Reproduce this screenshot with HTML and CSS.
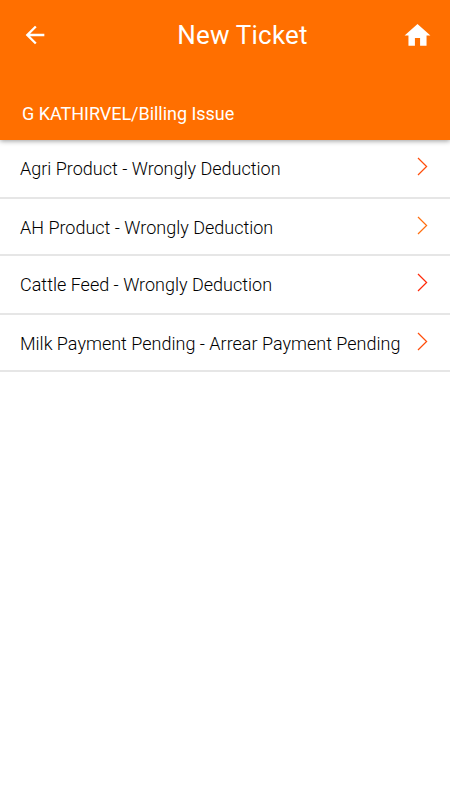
FILE: index.html
```html
<!DOCTYPE html>
<html lang="en">
<head>
<meta charset="utf-8">
<title>New Ticket</title>
<link rel="stylesheet" href="styles.css">
</head>
<body>
<header class="header">
  <div class="bar">
    <svg class="back" viewBox="0 0 24 24"><path d="M20 11H7.83l5.59-5.59L12 4l-8 8 8 8 1.41-1.41L7.83 13H20v-2z"/></svg>
    <h1 class="title">New Ticket</h1>
    <svg class="home" viewBox="0 0 24 24"><path d="M10 20v-6h4v6h5v-8h3L12 3 2 12h3v8z"/></svg>
  </div>
  <p class="path">G KATHIRVEL/Billing Issue</p>
</header>
<ul class="list">
  <li class="row tall"><span class="label">Agri Product - Wrongly Deduction</span><svg class="chevron" viewBox="0 0 11 19"><path d="M1 1 9.6 9.5 1 18"/></svg></li>
  <li class="row"><span class="label">AH Product - Wrongly Deduction</span><svg class="chevron amber" viewBox="0 0 11 19"><path d="M1 1 9.6 9.5 1 18"/></svg></li>
  <li class="row tall"><span class="label">Cattle Feed - Wrongly Deduction</span><svg class="chevron red" viewBox="0 0 11 19"><path d="M1 1 9.6 9.5 1 18"/></svg></li>
  <li class="row"><span class="label">Milk Payment Pending - Arrear Payment Pending</span><svg class="chevron" viewBox="0 0 11 19"><path d="M1 1 9.6 9.5 1 18"/></svg></li>
</ul>
</body>
</html>
```
FILE: styles.css
```css
* { box-sizing: border-box; }
body { margin: 0; background: #fff; font-family: Roboto, sans-serif; }
.header { height: 140px; background: #ff6f00; color: #fff; box-shadow: 0 1px 5px rgba(0,0,0,.4); position: relative; }
.bar { height: 70px; display: grid; grid-template-columns: 100px 1fr 65px; align-items: center; }
.back { width: 28px; height: 28px; margin-left: 21px; fill: #fff; }
.home { width: 31px; height: 31px; margin-left: 17px; fill: #fff; }
.title { margin: 0; font-size: 26px; line-height: 30px; font-weight: 400; letter-spacing: .2px; text-align: center; }
.path { margin: 33px 0 0 22px; font-size: 18px; line-height: 22px; letter-spacing: -.03px; }
.list { list-style: none; margin: 0; padding: 0; }
.row { height: 57px; padding: 0 22px 0 20px; display: flex; align-items: flex-start; justify-content: space-between; border-bottom: 2px solid #e6e6e6; }
.tall { height: 59px; }
.label { padding-top: 18px; font-size: 18px; line-height: 22px; font-weight: 360; color: #000; white-space: nowrap; }
.chevron { width: 11px; height: 19px; margin-top: 17px; fill: none; stroke: #ff4d0a; stroke-width: 1.25; }
.amber { stroke: #ff6f10; }
.red { stroke: #ff2a0a; }
```
